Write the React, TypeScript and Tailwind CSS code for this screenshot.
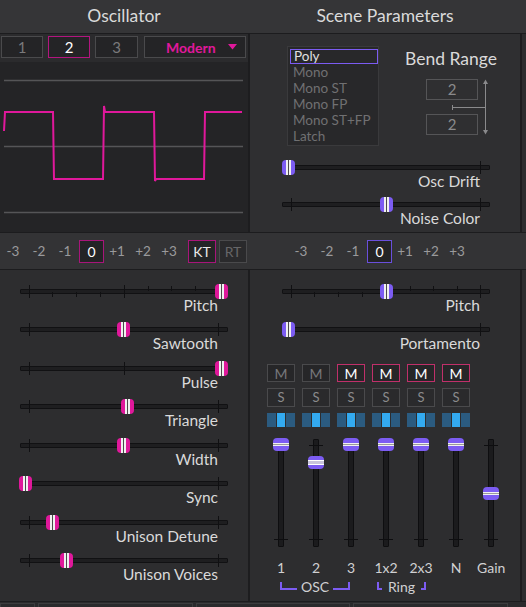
import clsx from "clsx"

const MAG = "#e0189b"
const PUR = "#7c5cf2"

type Tick = { x: number; kind: "full" | "up" | "down" }

const ends: Tick[] = [
  { x: 9, kind: "full" },
  { x: 198, kind: "full" },
]
const bipolar: Tick[] = [...ends, { x: 104, kind: "full" }]
const pitchTicks: Tick[] = [
  { x: 9, kind: "full" },
  { x: 32, kind: "down" },
  { x: 56, kind: "down" },
  { x: 80, kind: "down" },
  { x: 104, kind: "full" },
  { x: 128, kind: "up" },
  { x: 151, kind: "up" },
  { x: 175, kind: "up" },
  { x: 198, kind: "full" },
]

function HSlider({ label, pos, ticks, color }: { label: string; pos: number; ticks: Tick[]; color: string }) {
  return (
    <div className="flex w-[208px] flex-col">
      <div className="relative h-[15px]">
        <div className="absolute inset-x-0 top-[5px] h-[5px] rounded-[1px] border border-[#111113] bg-[#1e1e20]" />
        {ticks.map((t) => (
          <div
            key={t.x}
            className={clsx(
              "absolute w-[1px] bg-[#101012]",
              t.kind === "full" && "top-[1px] h-[13px]",
              t.kind === "up" && "top-[2px] h-[5px]",
              t.kind === "down" && "top-[8px] h-[5px]",
            )}
            style={{ left: t.x }}
          />
        ))}
        <div
          className="absolute top-0 flex h-[15px] w-[13px] items-center justify-center rounded-[4px]"
          style={{ left: pos, backgroundColor: color }}
        >
          <div className="h-[15px] w-[5px] border-x-2 border-[#f0f0f0] bg-[#4a4a4a]" />
        </div>
      </div>
      <div className="-mt-[2px] pr-[10px] text-right text-[15.5px] leading-[16px] text-[#dadada]">{label}</div>
    </div>
  )
}

function VFader({ top, light }: { top: number; light?: boolean }) {
  return (
    <div className="relative flex h-[114px] w-[28px] justify-center">
      <div className="mt-[2px] h-[108px] w-[6px] rounded-[1px] border border-[#0e0e10] bg-[#1b1b1d]" />
      <div className="absolute left-[7px] top-[8px] h-[1px] w-[14px] bg-[#0e0e10]" />
      <div className="absolute left-[7px] top-[102px] h-[1px] w-[14px] bg-[#0e0e10]" />
      <div
        className="absolute left-[6px] flex h-[13px] w-[16px] flex-col justify-center overflow-hidden rounded-[4px]"
        style={{ top, backgroundColor: PUR }}
      >
        {light ? (
          <div className="h-[5px] border-y border-white bg-[#c8c4dc]" />
        ) : (
          <div className="h-[3px] border-y border-[#f0f0f0] bg-[#9a9a9a]" />
        )}
      </div>
    </div>
  )
}

function OscBtn({ n, active, w }: { n: string; active?: boolean; w: string }) {
  return (
    <div
      className={clsx(
        "flex h-[22px] items-center justify-center border bg-[#242426] text-[15px]",
        w,
        active ? "border-[#b3157f] text-white" : "border-[#4a4a4c] text-[#7a7a7c]",
      )}
    >
      {n}
    </div>
  )
}

function Octave({ accent }: { accent: string }) {
  const vals = ["-3", "-2", "-1", "0", "+1", "+2", "+3"]
  return (
    <div className="flex">
      {vals.map((v) => (
        <div key={v} className="flex w-[26px] items-center justify-center">
          {v === "0" ? (
            <div
              className="ml-[1px] flex h-[23px] w-[25px] items-center justify-center border bg-[#242426] text-[14px] text-white"
              style={{ borderColor: accent }}
            >
              0
            </div>
          ) : (
            <span className="text-[13.5px] text-[#9a9a9c]">{v}</span>
          )}
        </div>
      ))}
    </div>
  )
}

const modes = ["Mono", "Mono ST", "Mono FP", "Mono ST+FP", "Latch"]
const mixLabels = ["1", "2", "3", "1x2", "2x3", "N", "Gain"]
const faderTops = [1, 19, 1, 1, 1, 1, 50]

export default function App() {
  return (
    <div className="flex h-[607px] w-[526px] flex-col overflow-hidden bg-[#2d2d2f] font-['Lato',sans-serif] text-[#dadada]">
      {/* Header */}
      <div className="flex h-[34px] shrink-0 border-b border-[#1c1c1e] bg-[#353537]">
        <div className="flex w-[248px] items-center justify-center text-[17.5px]">Oscillator</div>
        <div className="w-[2px]" />
        <div className="flex w-[270px] items-center justify-center text-[17.5px]">Scene Parameters</div>
      </div>

      {/* Top section */}
      <div className="flex h-[198px] shrink-0">
        <div className="flex w-[248px] flex-col bg-[#2b2b2d]">
          <div className="flex h-[28px] items-start gap-[5px] pl-[1px] pt-[2px]">
            <OscBtn n="1" w="w-[42px]" />
            <OscBtn n="2" w="w-[42px]" active />
            <OscBtn n="3" w="w-[43px]" />
            <div className="ml-[1px] flex h-[22px] w-[102px] items-center border border-[#4a4a4c] bg-[#242426] pl-[21px]">
              <span className="text-[14px] font-bold text-[#e0189b]">Modern</span>
              <svg className="ml-auto mr-[8px]" width="9" height="6" viewBox="0 0 9 6">
                <path d="M0 0 L9 0 L4.5 5.5 Z" fill={MAG} />
              </svg>
            </div>
          </div>
          <div className="h-[170px] bg-[#242426]">
            <svg width="248" height="170" viewBox="0 0 248 170">
              <g stroke="#555557" strokeWidth="1.5">
                <line x1="4" y1="18.5" x2="243" y2="18.5" />
                <line x1="4" y1="84.5" x2="243" y2="84.5" />
                <line x1="4" y1="150.5" x2="243" y2="150.5" />
              </g>
              <path
                d="M4 69 L5 50 L53 50 L54 117 L103 117 L104 44 L105 50 L154 50 L155 119 L156 117 L204 117 L205 50 L242 50"
                fill="none"
                stroke={MAG}
                strokeWidth="2"
              />
            </svg>
          </div>
        </div>
        <div className="w-[2px] bg-[#1d1d1f]" />
        <div className="flex w-[270px] flex-col bg-[#2f2f31]">
          <div className="flex items-start pt-[12px]">
            <div className="ml-[37px] h-[100px] w-[92px] border border-[#3a3a3c] bg-[#28282a] px-[1px] pt-[2px] text-[13.5px] text-[#707072]">
              <div className="ml-[1px] w-[88px] border border-[#7c5cf2] pl-[3px] leading-[13px] text-[#e0e0e0]">Poly</div>
              {modes.map((m) => (
                <div key={m} className="pl-[4px] leading-[16px]">
                  {m}
                </div>
              ))}
            </div>
            <div className="ml-[21px] flex w-[102px] flex-col items-center">
              <div className="mt-[3px] text-[17.5px] leading-[20px]">Bend Range</div>
              <div className="relative mt-[10px] h-[56px] w-full">
                <div className="ml-[26px] flex flex-col gap-[14px]">
                  <div className="flex h-[21px] w-[52px] items-center justify-center border border-[#555557] text-[15px] text-[#8a8a8c]">2</div>
                  <div className="flex h-[21px] w-[52px] items-center justify-center border border-[#555557] text-[15px] text-[#8a8a8c]">2</div>
                </div>
                <svg className="absolute inset-0" width="102" height="56" viewBox="0 0 102 56">
                  <g stroke="#8a8a8c" strokeWidth="1">
                    <line x1="85.5" y1="4" x2="85.5" y2="52" />
                    <line x1="52" y1="28.5" x2="85" y2="28.5" />
                    <line x1="52.5" y1="26" x2="52.5" y2="31" />
                  </g>
                  <path d="M83 5 L85.5 0.5 L88 5 Z" fill="#8a8a8c" />
                  <path d="M83 51 L85.5 55.5 L88 51 Z" fill="#8a8a8c" />
                </svg>
              </div>
            </div>
          </div>
          <div className="ml-[32px] mt-[13.5px] flex flex-col gap-[8px]">
            <HSlider label="Osc Drift" pos={0} ticks={ends} color={PUR} />
            <HSlider label="Noise Color" pos={98} ticks={ends} color={PUR} />
          </div>
        </div>
        <div className="w-[2px] bg-[#1d1d1f]" />
        <div className="flex-1 bg-[#2d2d2f]" />
      </div>

      {/* Octave row */}
      <div className="flex h-[38px] shrink-0 items-center border-y border-[#1c1c1e] bg-[#333335]">
        <div className="flex w-[248px] items-center">
          <Octave accent="#a8157a" />
          <div className="ml-[6px] flex h-[23px] w-[28px] items-center justify-center border border-[#a8157a] bg-[#242426] text-[14px] text-[#e8e8e8]">
            KT
          </div>
          <div className="ml-[3px] flex h-[23px] w-[28px] items-center justify-center border border-[#4a4a4c] bg-[#2a2a2c] text-[14px] text-[#666668]">
            RT
          </div>
        </div>
        <div className="w-[2px]" />
        <div className="ml-[38px]">
          <Octave accent="#6a4fdc" />
        </div>
      </div>

      {/* Bottom section */}
      <div className="flex h-[331px] shrink-0">
        <div className="flex w-[248px] flex-col gap-[9.5px] pl-[20px] pt-[13.5px]">
          <HSlider label="Pitch" pos={195} ticks={pitchTicks} color={MAG} />
          <HSlider label="Sawtooth" pos={97} ticks={bipolar} color={MAG} />
          <HSlider label="Pulse" pos={195} ticks={bipolar} color={MAG} />
          <HSlider label="Triangle" pos={101} ticks={bipolar} color={MAG} />
          <HSlider label="Width" pos={97} ticks={ends} color={MAG} />
          <HSlider label="Sync" pos={-1} ticks={ends} color={MAG} />
          <HSlider label="Unison Detune" pos={26} ticks={ends} color={MAG} />
          <HSlider label="Unison Voices" pos={40} ticks={ends} color={MAG} />
        </div>
        <div className="w-[2px] bg-[#1d1d1f]" />
        <div className="flex w-[270px] flex-col bg-[#2d2d2f] pt-[13.5px]">
          <div className="ml-[32px] flex flex-col gap-[9px]">
            <HSlider label="Pitch" pos={98} ticks={pitchTicks} color={PUR} />
            <HSlider label="Portamento" pos={0} ticks={ends} color={PUR} />
          </div>

          {/* Mixer */}
          <div className="ml-[17px] mt-[13.5px] flex flex-col">
            <div className="flex">
              {[0, 1, 2, 3, 4, 5].map((i) => (
                <div key={i} className="w-[35px]">
                  <div
                    className={clsx(
                      "flex h-[18px] w-[28px] items-center justify-center border bg-[#262628] text-[14px]",
                      i < 2 ? "border-[#4a4a4c] text-[#77777a]" : "border-[#c0306a] text-white",
                    )}
                  >
                    M
                  </div>
                </div>
              ))}
            </div>
            <div className="mt-[6px] flex">
              {[0, 1, 2, 3, 4, 5].map((i) => (
                <div key={i} className="w-[35px]">
                  <div className="flex h-[19px] w-[28px] items-center justify-center border border-[#4a4a4c] bg-[#2a2a2c] text-[13px] text-[#8a8a8c]">
                    S
                  </div>
                </div>
              ))}
            </div>
            <div className="mt-[6px] flex">
              {[0, 1, 2, 3, 4, 5].map((i) => (
                <div key={i} className="w-[35px]">
                  <div className="flex h-[14px] w-[28px] gap-[1px]">
                    <div className="flex-1 bg-[#2b5b80]" />
                    <div className="flex-1 bg-[#33aaf0]" />
                    <div className="flex-1 bg-[#2b5b80]" />
                  </div>
                </div>
              ))}
            </div>
            <div className="mt-[10px] flex">
              {faderTops.map((t, i) => (
                <div key={i} className="w-[35px]">
                  <VFader top={t} light={i === 1} />
                </div>
              ))}
            </div>
            <div className="mt-[9px] flex">
              {mixLabels.map((l) => (
                <div key={l} className="w-[35px]">
                  <div className="w-[28px] text-center text-[14px] leading-[16px] text-[#d0d0d2]">{l}</div>
                </div>
              ))}
            </div>
            <div className="ml-[13px] mt-[3px] flex h-[16px] items-start text-[14px] leading-[16px] text-[#d0d0d2]">
              <div className="mt-[3px] h-[8px] w-[17px] border-b-2 border-l-2 border-[#7c5cf2]" />
              <div className="w-[36px] text-center">OSC</div>
              <div className="mt-[3px] h-[8px] w-[17px] border-b-2 border-r-2 border-[#7c5cf2]" />
              <div className="w-[27px]" />
              <div className="mt-[3px] h-[8px] w-[5px] border-b-2 border-l-2 border-[#7c5cf2]" />
              <div className="w-[39px] text-center">Ring</div>
              <div className="mt-[3px] h-[8px] w-[5px] border-b-2 border-r-2 border-[#7c5cf2]" />
            </div>
          </div>
        </div>
        <div className="w-[2px] bg-[#1d1d1f]" />
        <div className="flex-1" />
      </div>

      {/* Bottom strip */}
      <div className="flex h-[6px] shrink-0 gap-[3px] border-t border-[#1c1c1e] bg-[#2a2a2c] pt-[1px]">
        <div className="w-[35px] border-x border-t border-[#3c3c3e]" />
        <div className="w-[155px] border-x border-t border-[#3c3c3e]" />
        <div className="w-[154px] border-x border-t border-[#3c3c3e]" />
        <div className="w-[155px] border-x border-t border-[#3c3c3e]" />
      </div>
    </div>
  )
}
